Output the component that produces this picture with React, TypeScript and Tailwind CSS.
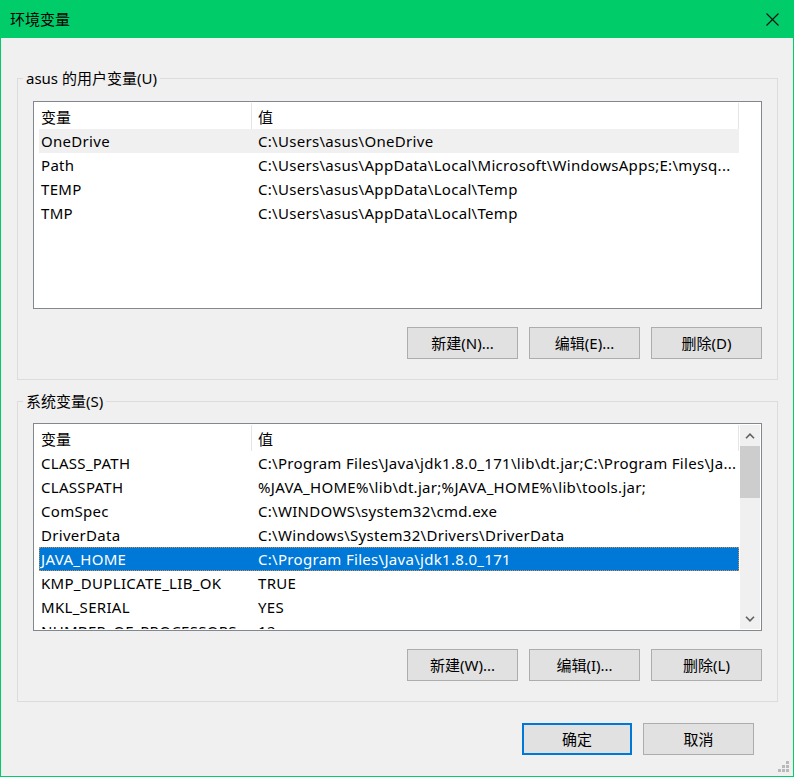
import React from "react";

const userVars: [string, string][] = [
  ["OneDrive", "C:\\Users\\asus\\OneDrive"],
  ["Path", "C:\\Users\\asus\\AppData\\Local\\Microsoft\\WindowsApps;E:\\mysq..."],
  ["TEMP", "C:\\Users\\asus\\AppData\\Local\\Temp"],
  ["TMP", "C:\\Users\\asus\\AppData\\Local\\Temp"],
];

const sysVars: [string, string][] = [
  ["CLASS_PATH", "C:\\Program Files\\Java\\jdk1.8.0_171\\lib\\dt.jar;C:\\Program Files\\Ja..."],
  ["CLASSPATH", "%JAVA_HOME%\\lib\\dt.jar;%JAVA_HOME%\\lib\\tools.jar;"],
  ["ComSpec", "C:\\WINDOWS\\system32\\cmd.exe"],
  ["DriverData", "C:\\Windows\\System32\\Drivers\\DriverData"],
  ["JAVA_HOME", "C:\\Program Files\\Java\\jdk1.8.0_171"],
  ["KMP_DUPLICATE_LIB_OK", "TRUE"],
  ["MKL_SERIAL", "YES"],
  ["NUMBER_OF_PROCESSORS", "12"],
];

function Header() {
  return (
    <div className="flex h-[26px] shrink-0 leading-[24px]">
      <div className="w-[213px] shrink-0 border-r border-[#e5e5e5] pl-[2px] pt-[2px]">变量</div>
      <div className="w-[487px] shrink-0 border-r border-[#e5e5e5] pl-[6px] pt-[2px]">值</div>
    </div>
  );
}

function Row({ name, value, state }: { name: string; value: string; state?: "hover" | "selected" }) {
  const cls =
    state === "selected"
      ? "bg-[#0078d7] text-white outline outline-1 outline-dotted outline-[#c89050] -outline-offset-1"
      : state === "hover"
      ? "bg-[#f0f0f0] text-black"
      : "text-black";
  return (
    <div
      className={`flex h-[24px] w-[700px] shrink-0 items-center whitespace-nowrap leading-[24px] tracking-[0.3px] ${cls}`}
    >
      <div className="w-[213px] shrink-0 overflow-hidden pl-[2px]">{name}</div>
      <div className="w-[487px] shrink-0 overflow-hidden pl-[6px]">{value}</div>
    </div>
  );
}

function Chevron({ up }: { up?: boolean }) {
  return (
    <svg width="10" height="6" viewBox="0 0 10 6" className="block">
      <polyline
        points={up ? "1,5.2 5,1.2 9,5.2" : "1,0.8 5,4.8 9,0.8"}
        fill="none"
        stroke="#606060"
        strokeWidth="1.6"
      />
    </svg>
  );
}

function ListBox({
  rows,
  scroll,
  hoverIdx,
  selIdx,
}: {
  rows: [string, string][];
  scroll?: boolean;
  hoverIdx?: number;
  selIdx?: number;
}) {
  return (
    <div className="flex h-[208px] w-[729px] border border-[#828790] bg-white p-[1px]">
      <div className="flex flex-1 flex-col overflow-hidden pl-[4px]">
        <Header />
        {rows.map((r, i) => (
          <Row
            key={r[0]}
            name={r[0]}
            value={r[1]}
            state={i === selIdx ? "selected" : i === hoverIdx ? "hover" : undefined}
          />
        ))}
      </div>
      {scroll ? (
        <div className="flex w-[20px] shrink-0 flex-col bg-[#f0f0f0]">
          <div className="flex h-[21px] items-center justify-center">
            <Chevron up />
          </div>
          <div className="h-[52px] bg-[#cdcdcd]" />
          <div className="flex-1" />
          <div className="flex h-[20px] items-center justify-center">
            <Chevron />
          </div>
        </div>
      ) : (
        <div className="w-[20px] shrink-0" />
      )}
    </div>
  );
}

function Btn({ label, primary, w = "w-[111px]" }: { label: string; primary?: boolean; w?: string }) {
  return (
    <button
      className={`${w} flex h-[32px] items-center justify-center bg-[#e1e1e1] text-[15px] text-black ${
        primary ? "border-2 border-[#0078d7]" : "border border-[#adadad]"
      }`}
    >
      {label}
    </button>
  );
}

function Group({
  title,
  children,
  pt,
  buttons,
}: {
  title: string;
  children: React.ReactNode;
  pt: string;
  buttons: string[];
}) {
  return (
    <fieldset className="m-0 w-[761px] border border-[#dcdcdc] p-0">
      <legend className="ml-[5px] px-[3px] text-[15px] leading-[20px] text-black">{title}</legend>
      <div className={`flex flex-col items-start pl-[15px] pr-[15px] pb-[20px] ${pt}`}>
        {children}
        <div className="mt-[18px] flex w-[729px] justify-end gap-[11px]">
          {buttons.map((b) => (
            <Btn key={b} label={b} />
          ))}
        </div>
      </div>
    </fieldset>
  );
}

export default function App() {
  return (
    <div
      className="relative flex h-[777px] w-[794px] flex-col border-x border-b border-[#00cc6a] bg-[#f0f0f0] text-[15px] text-black"
      style={{ fontFamily: '"Noto Sans", "Noto Sans CJK SC", sans-serif' }}
    >
      <div className="flex h-[38px] shrink-0 items-center justify-between bg-[#00cc6a] pl-[9px] pr-[14px]">
        <span className="text-[15px] leading-[20px] text-black">环境变量</span>
        <svg width="13" height="13" viewBox="0 0 13 13" className="block">
          <line x1="0.5" y1="0.5" x2="12.5" y2="12.5" stroke="#111" strokeWidth="1.1" />
          <line x1="12.5" y1="0.5" x2="0.5" y2="12.5" stroke="#111" strokeWidth="1.1" />
        </svg>
      </div>

      <div className="flex flex-1 flex-col pl-[16px] pr-[15px] pt-[30px]">
        <Group title="asus 的用户变量(U)" pt="pt-[13px]" buttons={["新建(N)...", "编辑(E)...", "删除(D)"]}>
          <ListBox rows={userVars} hoverIdx={0} />
        </Group>

        <div className="mt-[11px]">
          <Group title="系统变量(S)" pt="pt-[12px]" buttons={["新建(W)...", "编辑(I)...", "删除(L)"]}>
            <ListBox rows={sysVars} scroll selIdx={4} />
          </Group>
        </div>

        <div className="mt-[21px] flex justify-end gap-[11px] pr-[24px]">
          <Btn label="确定" primary w="w-[110px]" />
          <Btn label="取消" />
        </div>
      </div>

      <svg width="12" height="12" viewBox="0 0 12 12" className="absolute bottom-[3px] right-[3px] block">
        <rect x="8" y="0" width="3" height="3" fill="#b9b9b9" />
        <rect x="4" y="4" width="3" height="3" fill="#b9b9b9" />
        <rect x="8" y="4" width="3" height="3" fill="#b9b9b9" />
        <rect x="0" y="8" width="3" height="3" fill="#b9b9b9" />
        <rect x="4" y="8" width="3" height="3" fill="#b9b9b9" />
        <rect x="8" y="8" width="3" height="3" fill="#b9b9b9" />
      </svg>
    </div>
  );
}
